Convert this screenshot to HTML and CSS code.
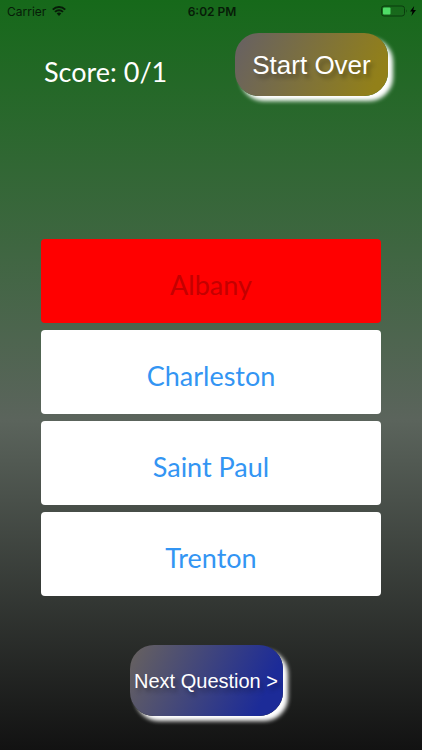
FILE: index.html
```html
<!DOCTYPE html>
<html lang="en">
<head>
	<meta charset="UTF-8">
	<meta name="viewport" content="width=device-width, initial-scale=1">
	<title>State Capitals Quiz</title>
	<link rel="stylesheet" href="styles.css">
</head>

<body>

<div class="status-bar">
	<div class="carrier">
		<span>Carrier</span>
		<svg class="wifi" viewBox="0 0 14 10" aria-hidden="true">
			<path d="M0.8 3.6a8.8 8.8 0 0 1 12.4 0M3 5.9a5.7 5.7 0 0 1 8 0" fill="none" stroke="currentColor" stroke-width="2"/>
			<path d="M4.7 7.6a3.2 3.2 0 0 1 4.6 0L7 10z" fill="currentColor"/>
		</svg>
	</div>
	<span class="time">6:02 PM</span>
	<div class="battery">
		<svg viewBox="0 0 36 12" aria-hidden="true">
			<rect x="0.5" y="1" width="23" height="10" rx="2.5" fill="none" stroke="#0b3c0e"/>
			<rect x="2" y="2.5" width="7.5" height="7" rx="1" fill="#4fdc67"/>
			<path d="M25 4.3q1.5 1.7 0 3.4z" fill="#0b3c0e"/>
			<path d="M33.2 1L29 6.6h2.5L30.4 11l4.6-6h-2.7z" fill="#000"/>
		</svg>
	</div>
</div>

<header class="top">
	<p class="score">Score: 0/1</p>
	<button class="pill start-over" type="button">Start Over</button>
</header>

<main class="answers">
	<button class="answer wrong" type="button" disabled>Albany</button>
	<button class="answer" type="button">Charleston</button>
	<button class="answer" type="button">Saint Paul</button>
	<button class="answer" type="button">Trenton</button>
</main>

<footer class="bottom">
	<button class="pill next" type="button">Next Question &gt;</button>
</footer>

</body>
</html>
```

FILE: styles.css
```css
* {
	box-sizing: border-box;
}

body {
	margin: 0;
	min-height: 100vh;
	display: flex;
	flex-direction: column;
	background: linear-gradient(#16691a, #5b645c 56%, #121212);
	color: white;
	font-family: "Liberation Sans", Arial, sans-serif;
}

/* status bar */
.status-bar {
	display: grid;
	grid-template-columns: 1fr auto 1fr;
	align-items: center;
	height: 22px;
	padding: 0 5px 0 7px;
	color: #071c08;
	font-family: Inter, sans-serif;
	font-size: 12px;
}

.carrier {
	display: flex;
	align-items: center;
	gap: 6px;
}

.wifi {
	width: 14px;
	height: 10px;
}

.time {
	font-weight: 600;
}

.battery {
	display: flex;
	justify-content: flex-end;
}

.battery svg {
	width: 36px;
	height: 12px;
}

/* score and start over */
.top {
	display: flex;
	justify-content: space-between;
	align-items: center;
	padding: 11px 34px 0 44px;
}

.score,
.answer {
	font-family: "Bradley Hand", Lato, sans-serif;
	font-size: 27px;
}

.score {
	margin: 0;
	padding-top: 14px;
}

.pill {
	border: 0;
	padding: 2px 0 0;
	width: 153px;
	color: white;
	font-family: inherit;
	white-space: nowrap;
	text-shadow: 3px 4px 4px rgba(0, 0, 0, 0.3);
	box-shadow: 5px 5px 4px white;
}

.start-over {
	height: 63px;
	border-radius: 24px;
	background: linear-gradient(115deg, #666064, #928019 90%);
	font-size: 26px;
}

/* answers */
.answers {
	display: flex;
	flex-direction: column;
	gap: 7px;
	margin-top: 143px;
	padding: 0 41px;
}

.answer {
	height: 84px;
	border: 0;
	border-radius: 4px;
	padding: 6px 0 0;
	background: white;
	color: #3395f3;
}

.wrong {
	background: #ff0000;
	color: #c40000;
}

/* next question */
.bottom {
	display: flex;
	justify-content: center;
	margin-top: 49px;
	padding: 0 10px 34px 0;
}

.next {
	height: 71px;
	border-radius: 24px;
	background: linear-gradient(115deg, #68625e, #1c2b98 85%);
	font-size: 20px;
}
```
